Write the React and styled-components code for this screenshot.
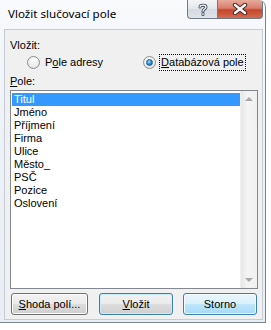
import React from 'react'
import styled, { createGlobalStyle, css } from 'styled-components'

const GlobalStyle = createGlobalStyle`
  html, body {
    margin: 0;
    padding: 0;
    background: #ffffff;
  }
`

// Style dialog window frame
const Window = styled.div`
  width: 266px;
  height: 323px;
  box-sizing: border-box;
  background: linear-gradient(180deg, #f8fafc 0%, #eef2f7 40%, #e9eef4 100%);
  border-right: 1px solid #7b8694;
  border-bottom: 1px solid #7b8694;
  border-top-right-radius: 7px;
  display: flex;
  flex-direction: column;
  overflow: hidden;
`

const TitleBar = styled.div`
  height: 29px;
  display: flex;
  align-items: flex-start;
  justify-content: space-between;
  flex-shrink: 0;
`

const Caption = styled.div`
  font-family: "Noto Sans", sans-serif;
  font-size: 11.6px;
  color: #000;
  padding: 6px 0 0 8px;
  line-height: 16px;
`

const Controls = styled.div`
  display: flex;
  margin-right: 2px;
`

const CaptionButton = styled.div`
  height: 19px;
  box-sizing: border-box;
  display: flex;
  align-items: center;
  justify-content: center;
  border: 1px solid #6f7a88;
  border-top: none;

  ${props => props.kind === 'help' && css`
    width: 30px;
    border-right: none;
    border-bottom-left-radius: 4px;
    background: linear-gradient(180deg, #f3f5f8 0%, #e2e6ec 50%, #d4dae2 51%, #dfe4ea 100%);
  `}

  ${props => props.kind === 'close' && css`
    width: 46px;
    border-bottom-right-radius: 4px;
    background: linear-gradient(180deg, #e8aa9c 0%, #d97f6c 45%, #c4472f 55%, #d6694e 100%);
  `}
`

// Style client area
const Client = styled.div`
  flex: 1;
  margin: 0 2px 2px 4px;
  background: #f0f0f0;
  border: 1px solid #c5ccd5;
  display: flex;
  flex-direction: column;
  padding: 9px 5px 0 5px;
  font-family: "Liberation Sans", Arial, sans-serif;
  font-size: 11px;
  color: #000;
`

const Label = styled.div`
  line-height: 13px;
  height: 13px;
`

const RadioRow = styled.div`
  display: flex;
  align-items: center;
  height: 18px;
  margin: 1px 0 4px 0;
`

const RadioOption = styled.div`
  display: flex;
  align-items: center;
  margin-left: ${props => props.offset}px;
`

const RadioCircle = styled.span`
  width: 13px;
  height: 13px;
  box-sizing: border-box;
  border-radius: 50%;
  border: 1px solid #8e8f8f;
  background: radial-gradient(circle at 50% 35%, #ffffff 0%, #eeeeee 55%, #d6d6d6 100%);
  display: flex;
  align-items: center;
  justify-content: center;
  margin-right: 3px;

  ${props => props.checked && css`
    &::after {
      content: '';
      width: 5px;
      height: 5px;
      border-radius: 50%;
      background: radial-gradient(circle at 40% 35%, #9fdcff 0%, #1b8ad1 55%, #0c4f86 100%);
      border: 1px solid #1a5f91;
    }
  `}
`

const RadioText = styled.span`
  line-height: 13px;
  padding: 1px 1px;
  border: 1px dotted ${props => (props.focused ? '#000' : 'transparent')};
`

const Key = styled.span`
  text-decoration: underline;
  text-underline-offset: 1px;
`

const ListBox = styled.div`
  margin-top: 2px;
  height: 199px;
  box-sizing: border-box;
  width: 248px;
  border: 1px solid #828790;
  background: #fff;
  display: flex;
`

const Items = styled.div`
  flex: 1;
  padding: 2px 0 0 1px;
`

const Item = styled.div`
  height: 13px;
  line-height: 13px;
  padding-left: 2px;
  white-space: nowrap;
  ${props => props.selected && css`
    background: #3399ff;
    color: #fff;
  `}
`

const ScrollBar = styled.div`
  width: 17px;
  background: linear-gradient(90deg, #e7e7e7 0%, #f4f4f4 40%, #f0f0f0 100%);
  border-left: 1px solid #f0f0f0;
  display: flex;
  flex-direction: column;
  justify-content: space-between;
  align-items: center;
  padding: 6px 0;
  box-sizing: border-box;
`

const Arrow = styled.span`
  width: 0;
  height: 0;
  border-left: 4px solid transparent;
  border-right: 4px solid transparent;
  ${props => props.up
    ? css`border-bottom: 4px solid #a8a8a8;`
    : css`border-top: 4px solid #a8a8a8;`}
`

const ButtonRow = styled.div`
  display: flex;
  margin-top: 4px;
  padding-left: 1px;
`

const Button = styled.div`
  height: 22px;
  box-sizing: border-box;
  border: 1px solid #707070;
  border-radius: 3px;
  display: flex;
  align-items: center;
  justify-content: center;
  width: ${props => props.width}px;
  margin-left: ${props => props.gap || 0}px;
  background: linear-gradient(180deg, #f2f2f2 0%, #ebebeb 50%, #dddddd 51%, #cfcfcf 100%);
  box-shadow: inset 0 0 0 1px #fcfcfc;

  ${props => props.isDefault && css`
    border-color: #3c7fb1;
    box-shadow: inset 0 0 0 1px #c7ecfb;
  `}

  ${props => props.hover && css`
    border-color: #3c7fb1;
    background: linear-gradient(180deg, #eaf6fd 0%, #d9f0fc 50%, #bee6fd 51%, #a7d9f5 100%);
    box-shadow: inset 0 0 0 1px #f4fbfe;
  `}
`

const HelpGlyph = () => (
  <svg width='10' height='13' viewBox='0 0 10 13'>
    <path
      d='M2 4 C2 1.5 8 1.5 8 4 C8 6 5 6 5 8.2 M5 10.5 L5 11.5'
      fill='none'
      stroke='#3b4655'
      strokeWidth='3'
      strokeLinecap='round'
    />
    <path
      d='M2 4 C2 1.5 8 1.5 8 4 C8 6 5 6 5 8.2 M5 10.5 L5 11.5'
      fill='none'
      stroke='#ffffff'
      strokeWidth='1.3'
      strokeLinecap='round'
    />
  </svg>
)

const CloseGlyph = () => (
  <svg width='16' height='12' viewBox='0 0 16 12'>
    <path d='M3 2 L13 10 M13 2 L3 10' stroke='#4a2320' strokeWidth='4.4' strokeLinecap='round' />
    <path d='M3 2 L13 10 M13 2 L3 10' stroke='#ffffff' strokeWidth='2.4' strokeLinecap='round' />
  </svg>
)

const fields = ['Titul', 'Jméno', 'Příjmení', 'Firma', 'Ulice', 'Město_', 'PSČ', 'Pozice', 'Oslovení']

const App = () => (
  <React.Fragment>
    <GlobalStyle />
    <Window>
      <TitleBar>
        <Caption>Vložit slučovací pole</Caption>
        <Controls>
          <CaptionButton kind='help'><HelpGlyph /></CaptionButton>
          <CaptionButton kind='close'><CloseGlyph /></CaptionButton>
        </Controls>
      </TitleBar>

      <Client>
        <Label>Vložit:</Label>
        <RadioRow>
          <RadioOption offset={17}>
            <RadioCircle />
            <RadioText>P<Key>o</Key>le adresy</RadioText>
          </RadioOption>
          <RadioOption offset={38}>
            <RadioCircle checked />
            <RadioText focused><Key>D</Key>atabázová pole</RadioText>
          </RadioOption>
        </RadioRow>

        <Label><Key>P</Key>ole:</Label>
        <ListBox>
          <Items>
            {fields.map((item, i) => (
              <Item key={item} selected={i === 0}>{item}</Item>
            ))}
          </Items>
          <ScrollBar>
            <Arrow up />
            <Arrow />
          </ScrollBar>
        </ListBox>

        <ButtonRow>
          <Button width={77}><Key>S</Key>hoda polí...</Button>
          <Button width={74} gap={11} isDefault><Key>V</Key>ložit</Button>
          <Button width={74} gap={10} hover>Storno</Button>
        </ButtonRow>
      </Client>
    </Window>
  </React.Fragment>
)

export default App
